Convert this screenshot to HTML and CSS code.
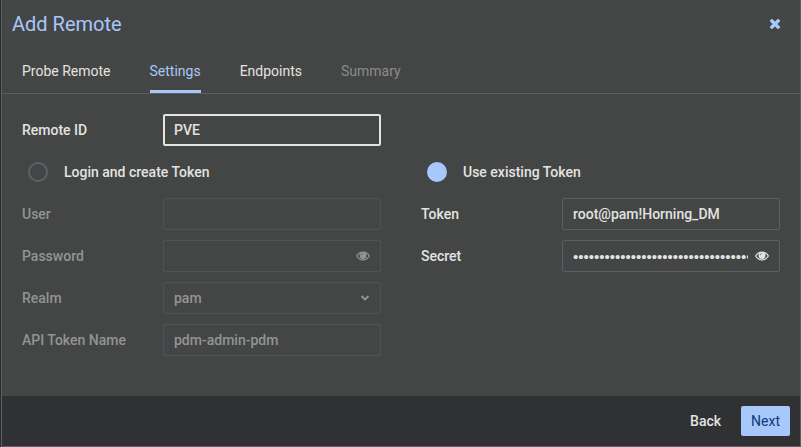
FILE: index.html
```html
<!DOCTYPE html>
<html lang="en">
<head>
  <meta charset="UTF-8">
  <meta name="viewport" content="width=device-width, initial-scale=1.0">
  <title>Add Remote</title>
  <link rel="stylesheet" href="styles.css">
</head>
<body>
  <form class="dialog">
    <header class="dialog-header">
      <h1>Add Remote</h1>
      <button type="button" class="close" aria-label="Close">
        <svg width="10" height="10" viewBox="0 0 10 10"><path d="M2 2l6 6M8 2l-6 6" fill="none" stroke="currentColor" stroke-width="3.4" stroke-linecap="square" stroke-linejoin="round"/></svg>
      </button>
    </header>

    <nav class="tabs">
      <button type="button" class="tab">Probe Remote</button>
      <button type="button" class="tab active">Settings</button>
      <button type="button" class="tab">Endpoints</button>
      <button type="button" class="tab" disabled>Summary</button>
    </nav>

    <main class="settings">
      <div class="column">
        <div class="row">
          <label for="remote-id">Remote ID</label>
          <div class="field focused"><input type="text" id="remote-id" value="PVE"></div>
        </div>
        <label class="choice"><input type="radio" name="mode" value="login">Login and create Token</label>
        <div class="row disabled">
          <label for="user">User</label>
          <div class="field"><input type="text" id="user" disabled></div>
        </div>
        <div class="row disabled">
          <label for="password">Password</label>
          <div class="field">
            <input type="password" id="password" disabled>
            <button type="button" class="reveal" aria-label="Show password" disabled>
              <svg width="14" height="10" viewBox="0 0 14 10"><path d="M.6 5C2.1 2.6 4.3 1.1 7 1.1S11.9 2.6 13.4 5C11.9 7.4 9.7 8.9 7 8.9S2.1 7.4.6 5z" fill="none" stroke="currentColor" stroke-width="1.2"/><circle cx="7" cy="4.4" r="3.5" fill="currentColor"/><path d="M5.2 4.3A1.8 1.8 0 0 1 7 2.5" fill="none" stroke="#444645" stroke-width=".5"/></svg>
            </button>
          </div>
        </div>
        <div class="row disabled">
          <label for="realm">Realm</label>
          <div class="field">
            <select id="realm" disabled><option>pam</option></select>
            <svg class="arrow" width="10" height="8" viewBox="0 0 10 8"><path d="M1.5 2L5 5.5 8.5 2" fill="none" stroke="currentColor" stroke-width="1.8"/></svg>
          </div>
        </div>
        <div class="row disabled">
          <label for="token-name">API Token Name</label>
          <div class="field"><input type="text" id="token-name" value="pdm-admin-pdm" disabled></div>
        </div>
      </div>

      <div class="column second">
        <label class="choice"><input type="radio" name="mode" value="token" checked>Use existing Token</label>
        <div class="row">
          <label for="token">Token</label>
          <div class="field"><input type="text" id="token" value="root@pam!Horning_DM"></div>
        </div>
        <div class="row">
          <label for="secret">Secret</label>
          <div class="field">
            <input type="password" id="secret" value="000000000000000000000000000000000000">
            <button type="button" class="reveal" aria-label="Show secret">
              <svg width="14" height="10" viewBox="0 0 14 10"><path d="M.6 5C2.1 2.6 4.3 1.1 7 1.1S11.9 2.6 13.4 5C11.9 7.4 9.7 8.9 7 8.9S2.1 7.4.6 5z" fill="none" stroke="currentColor" stroke-width="1.2"/><circle cx="7" cy="4.4" r="3.5" fill="currentColor"/><path d="M5.2 4.3A1.8 1.8 0 0 1 7 2.5" fill="none" stroke="#444645" stroke-width=".5"/></svg>
            </button>
          </div>
        </div>
      </div>
    </main>

    <footer class="dialog-footer">
      <button type="button" class="button">Back</button>
      <button type="button" class="button primary">Next</button>
    </footer>
  </form>
</body>
</html>
```
FILE: styles.css
```css
* {
  box-sizing: border-box;
}
body {
  margin: 0;
  background: #2b2c2e;
  color: #e3e3e1;
  font: 500 14px/20px Roboto, sans-serif;
}
button, input, select {
  margin: 0;
  padding: 0;
  border: none;
  background: none;
  color: inherit;
  font: inherit;
}
button {
  cursor: pointer;
}
svg {
  display: block;
}
.dialog {
  display: flex;
  flex-direction: column;
  min-height: 100vh;
  margin-left: 1px;
  border: 1px solid #5b5e66;
  border-top: none;
  background: #444645;
}
.dialog-header {
  display: flex;
  align-items: center;
  justify-content: space-between;
  padding: 10px 20px 10px 10px;
  color: #a8c7fa;
}
.dialog-header h1 {
  margin: 0;
  font-size: 20px;
  font-weight: 400;
  line-height: 28px;
}
.tabs {
  display: flex;
  gap: 39px;
  padding: 0 20px;
  border-bottom: 1px solid #5b5e66;
}
.tab {
  height: 45px;
  padding-top: 3px;
  border-bottom: 3px solid transparent;
  font-weight: 400;
}
.tab.active {
  border-color: #a8c7fa;
  color: #a8c7fa;
}
.tab:disabled {
  color: #8b8c8b;
}
.settings {
  display: grid;
  grid-template-columns: repeat(2, minmax(0, 1fr));
  gap: 40px;
  flex: 1;
  padding: 20px 20px 40px;
}
.column {
  display: flex;
  flex-direction: column;
  gap: 10px;
}
/* line up with the row under Remote ID */
.column.second {
  padding-top: 42px;
}
.row {
  display: grid;
  grid-template-columns: 141px minmax(0, 1fr);
  align-items: center;
}
.row.disabled {
  color: #939493;
}
.field {
  display: flex;
  align-items: center;
  height: 32px;
  padding: 0 10px;
  border: 1px solid #5b5e66;
  border-radius: 2px;
}
.disabled .field {
  border-color: #505255;
}
.field.focused {
  padding: 0 9px;
  border: 2px solid #e3e3e1;
}
.field input, .field select {
  flex: 1;
  min-width: 0;
  height: 20px;
  outline: none;
  appearance: none;
  opacity: 1;
}
.field input[type="password"] {
  font: 15px "Liberation Sans", Arial, sans-serif;
}
.reveal {
  margin-left: 7px;
}
.choice {
  display: flex;
  align-items: center;
  gap: 16px;
  height: 32px;
  padding-left: 6px;
}
.choice input {
  width: 20px;
  height: 20px;
  border: 2px solid #5b626b;
  border-radius: 50%;
  appearance: none;
}
.choice input:checked {
  border-color: #a8c7fa;
  background: #a8c7fa;
}
.dialog-footer {
  display: flex;
  justify-content: flex-end;
  gap: 10px;
  padding: 10px;
  background: #303133;
}
.button {
  height: 30px;
  padding: 0 10px;
  border-radius: 2px;
}
.button.primary {
  background: #a8c7fa;
  color: #0b3b78;
  font-weight: 400;
}
```
